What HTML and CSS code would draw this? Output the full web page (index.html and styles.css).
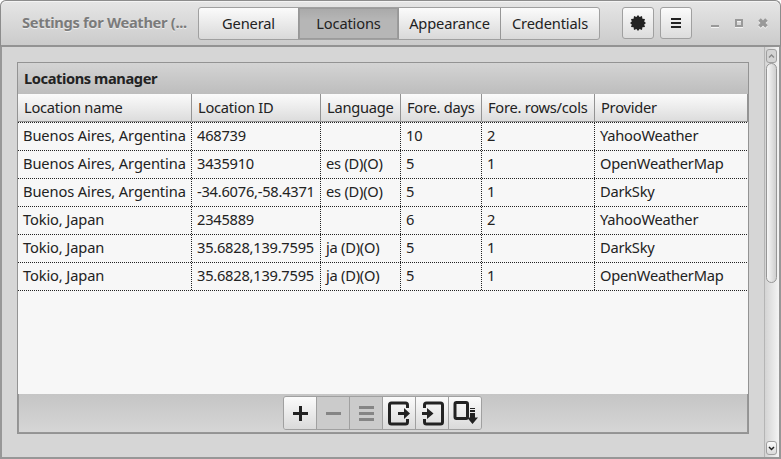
FILE: index.html
```html
<!DOCTYPE html>
<html lang="en">
<head>
<meta charset="utf-8">
<title>Settings for Weather</title>
<link rel="stylesheet" href="styles.css">
</head>
<body>
<div class="window">
  <header class="titlebar">
    <h1 class="title">Settings for Weather (...</h1>
    <nav class="tabs">
      <button class="tab general">General</button>
      <button class="tab locations active">Locations</button>
      <button class="tab appearance">Appearance</button>
      <button class="tab credentials">Credentials</button>
    </nav>
    <div class="actions">
      <button class="action" aria-label="Options"><svg width="16" height="16" viewBox="0 0 16 16"><path fill="#222" d="M8 0l1.600 2.100L12 1.100l.4 2.600 2.600.3-.8 2.400L16 8l-1.800 1.600.8 2.400-2.600.3-.4 2.600-2.400-1L8 16l-1.600-2.100-2.400 1-.4-2.600-2.600-.3.8-2.400L0 8l1.800-1.600L1 4l2.600-.3L4 1.100l2.400 1z"/></svg></button>
      <button class="action" aria-label="Menu"><svg width="16" height="16" viewBox="0 0 16 16"><path fill="#222" d="M3 3h10v2H3zM3 7h10v2H3zM3 11h10v2H3z"/></svg></button>
    </div>
    <div class="controls">
      <svg width="72" height="16" viewBox="0 0 72 16"><g transform="translate(0 1)"><path fill="#f4f4f4" d="M3 9h8v2H3zM27 3h8v8h-8zM29 5v4h4V5z" fill-rule="evenodd"/><path d="M51.500 3.500l7 7M58.500 3.500l-7 7" stroke="#f4f4f4" stroke-width="3.600"/></g><path fill="#999" d="M3 9h8v2H3zM27 3h8v8h-8zM29 5v4h4V5z" fill-rule="evenodd"/><path d="M51.500 3.500l7 7M58.500 3.500l-7 7" stroke="#999" stroke-width="3.600"/></svg>
    </div>
  </header>
  <div class="body">
    <main class="content">
      <section class="panel">
        <h2 class="panel-title">Locations manager</h2>
        <div class="table">
          <div class="row head"><span>Location name</span><span>Location ID</span><span>Language</span><span>Fore. days</span><span>Fore. rows/cols</span><span>Provider</span></div>
          <div class="row"><span>Buenos Aires, Argentina</span><span>468739</span><span></span><span>10</span><span>2</span><span>YahooWeather</span></div>
          <div class="row"><span>Buenos Aires, Argentina</span><span>3435910</span><span>es (D)(O)</span><span>5</span><span>1</span><span>OpenWeatherMap</span></div>
          <div class="row"><span>Buenos Aires, Argentina</span><span>-34.6076,-58.4371</span><span>es (D)(O)</span><span>5</span><span>1</span><span>DarkSky</span></div>
          <div class="row"><span>Tokio, Japan</span><span>2345889</span><span></span><span>6</span><span>2</span><span>YahooWeather</span></div>
          <div class="row"><span>Tokio, Japan</span><span>35.6828,139.7595</span><span>ja (D)(O)</span><span>5</span><span>1</span><span>DarkSky</span></div>
          <div class="row"><span>Tokio, Japan</span><span>35.6828,139.7595</span><span>ja (D)(O)</span><span>5</span><span>1</span><span>OpenWeatherMap</span></div>
        </div>
        <footer class="toolbar">
          <div class="tools">
            <button class="tool" aria-label="Add"><svg viewBox="0 0 32 32"><path fill="#222" d="M8 15h15v3H8zM14 9h3v15h-3z"/></svg></button>
            <button class="tool off" aria-label="Remove"><svg viewBox="0 0 32 32"><path fill="#858585" d="M8 15h15v3H8z"/></svg></button>
            <button class="tool off" aria-label="Edit"><svg viewBox="0 0 32 32"><path fill="#858585" d="M8 9h15v3H8zM8 15h15v3H8zM8 21h15v3H8z"/></svg></button>
            <button class="tool" aria-label="Export"><svg viewBox="0 0 32 32"><path fill="none" stroke="#222" stroke-width="3" d="M23.500 11V8q0-2-2-2h-14q-2 0-2 2v17q0 2 2 2h14q2 0 2-2v-3"/><path fill="#222" d="M14 15h6v-4l6 5.500-6 5.500v-4h-6z"/></svg></button>
            <button class="tool" aria-label="Import"><svg viewBox="0 0 32 32"><path fill="none" stroke="#222" stroke-width="3" d="M7.500 11V8q0-2 2-2h14q2 0 2 2v17q0 2-2 2h-14q-2 0-2-2v-3"/><path fill="#222" d="M5 15h5v-4l6.500 5.500L10 22v-4H5z"/></svg></button>
            <button class="tool" aria-label="Import defaults"><svg viewBox="0 0 32 32"><rect x="5" y="5.500" width="12.500" height="16" rx="1.500" fill="none" stroke="#222" stroke-width="3"/><path fill="#222" d="M20 11h5v1h-5zM20 13h5v2h-5zM20 16h5v4.500h3L22.500 27 17 20.500h3z"/></svg></button>
          </div>
        </footer>
      </section>
    </main>
    <aside class="scrollbar">
      <div class="step up"><svg width="9" height="10" viewBox="0 0 9 10"><path d="M2 6.500L4.500 4 7 6.500" fill="none" stroke="#888" stroke-width="1.400"/></svg></div>
      <div class="thumb"></div>
      <div class="step down"><svg width="9" height="10" viewBox="0 0 9 10"><path d="M2 4L4.500 6.500 7 4" fill="none" stroke="#222" stroke-width="1.500"/></svg></div>
    </aside>
  </div>
</div>
</body>
</html>
```
FILE: styles.css
```css
* { box-sizing: border-box; }
body {
  margin: 0;
  width: 781px;
  height: 459px;
  overflow: hidden;
  background: #fff;
  color: #222;
  font: 14.67px/20px "Noto Sans", sans-serif;
}
button { font: inherit; color: inherit; padding: 0; border: 0; background: none; }
svg { display: block; }
.window {
  height: 459px;
  display: flex;
  flex-direction: column;
  background: #d6d6d6;
  border-radius: 6px 6px 0 0;
}
.titlebar {
  height: 47px;
  flex: none;
  display: flex;
  align-items: flex-start;
  border: 1px solid #8c8c8c;
  border-bottom: 2px solid #939393;
  border-radius: 6px 6px 0 0;
  background: linear-gradient(#e6e6e6, #cbcbcb);
  box-shadow: inset 0 1px #f4f4f4;
}
.title {
  width: 176px;
  margin: 11px 0 0 21px;
  font-size: 14.67px;
  line-height: 20px;
  font-weight: 700;
  letter-spacing: -0.32px;
  color: #7b7b7b;
  text-shadow: 0 1px #eee;
  white-space: nowrap;
}
.tabs {
  width: 402px;
  height: 33px;
  margin-top: 6px;
  display: flex;
  border: 1px solid #a0a0a0;
  border-radius: 3px;
  overflow: hidden;
  background: linear-gradient(#fbfbfb, #d9d9d9);
}
.tab { height: 31px; padding-bottom: 2px; border-right: 1px solid #979797; letter-spacing: -0.15px; }
.general { width: 100px; }
.locations { width: 100px; }
.appearance { width: 102px; }
.credentials { width: 98px; border-right: 0; }
.tab.active { background: linear-gradient(#a9a9a9, #b6b6b6 40%); box-shadow: inset 1px 1px #9b9b9b, inset -1px -1px #9b9b9b; }
.actions { display: flex; gap: 6px; margin: 6px 0 0 22px; }
.action {
  width: 32px;
  height: 32px;
  display: grid;
  place-items: center;
  border: 1px solid #a0a0a0;
  border-radius: 3px;
  background: linear-gradient(#fbfbfb, #dcdcdc);
}
.controls { margin: 15px 0 0 16px; }
.body {
  flex: 1;
  display: flex;
  border: solid #979797;
  border-width: 0 2px 2px;
}
.content { width: 762px; padding: 15px; }
.panel {
  width: 732px;
  height: 372px;
  border: 1px solid #939393;
  display: flex;
  flex-direction: column;
  background: #f7f7f7;
}
.panel-title {
  height: 31px;
  flex: none;
  margin: 0;
  padding: 5px 6px 0;
  font-size: 14.67px;
  line-height: 20px;
  letter-spacing: -0.42px;
  background: linear-gradient(#d4d4d4, #bdbdbd);
}
.table { flex: 1; }
.row {
  height: 28px;
  display: grid;
  grid-template-columns: 174px 129px 80px 81px 113px 153px;
  background: repeating-linear-gradient(90deg, #222 0 1px, transparent 1px 2px) 0 100% / 100% 1px no-repeat;
}
.row span {
  padding: 2px 0 0 5px;
  white-space: nowrap;
  letter-spacing: -0.24px;
  background: repeating-linear-gradient(#222 0 1px, transparent 1px 2px) 100% 0 / 1px 100% no-repeat;
}
.row span:first-child { letter-spacing: -0.12px; }
.row span:last-child { background: none; }
.row.head {
  height: 29px;
  background: repeating-linear-gradient(90deg, #222 0 1px, #f7f7f7 1px 2px) 0 100% / 100% 1px no-repeat,
    linear-gradient(#fbfbfb, #dadada);
}
.row.head span {
  height: 28px;
  padding: 3px 0 0 6px;
  letter-spacing: -0.25px;
  background: none;
  border-right: 1px solid #939393;
  border-bottom: 1px solid #939393;
}
.toolbar {
  height: 39px;
  display: flex;
  justify-content: center;
  padding: 2px 2px 0 0;
  border: solid #979797;
  border-width: 0 1px 1px;
  background: linear-gradient(#c5c5c5, #d6d6d6);
}
.tools {
  width: 199px;
  height: 34px;
  display: flex;
  border: 1px solid #a0a0a0;
  border-radius: 3px;
  overflow: hidden;
}
.tool { width: 33px; height: 32px; padding-left: 1px; border-right: 1px solid #a0a0a0; background: linear-gradient(#fbfbfb, #dadada); }
.tool:last-child { border-right: 0; }
.tool.off { background: #cbcbcb; }
.tool svg { width: 32px; height: 32px; }
.scrollbar {
  width: 15px;
  flex: none;
  display: flex;
  flex-direction: column;
  border-left: 1px solid #b5b5b5;
  padding: 2px 2px 2px 1px;
  background: linear-gradient(90deg, #d4d4d4, #f4f4f4);
}
.step {
  width: 11px;
  height: 14px;
  display: grid;
  place-items: center;
  border: 1px solid #a0a0a0;
  border-radius: 3px;
  background: linear-gradient(#fbfbfb, #dadada);
}
.step.up { background: #d4d4d4; }
.thumb {
  width: 11px;
  height: 220px;
  border: 1px solid #969696;
  border-radius: 6px;
  background: linear-gradient(90deg, #f7f7f7, #cfcfcf);
}
.step.down { margin-top: auto; }
```
